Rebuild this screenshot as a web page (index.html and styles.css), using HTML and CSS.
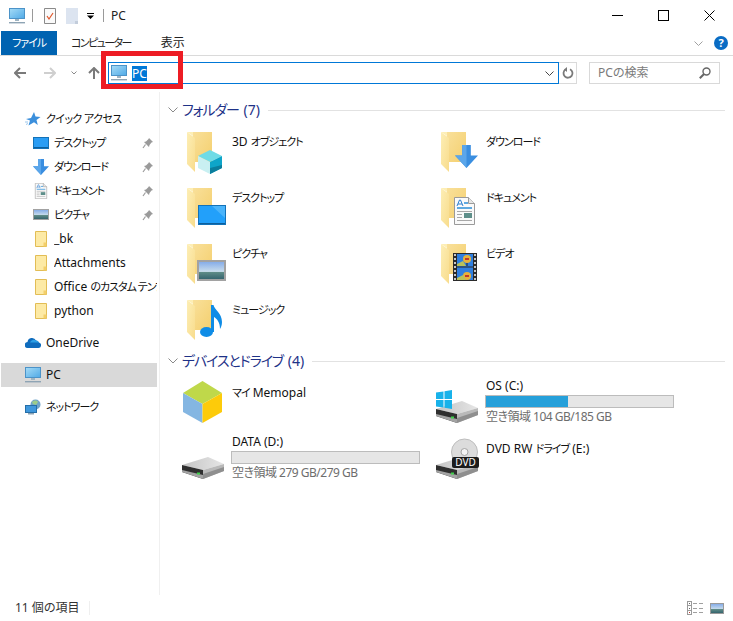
FILE: index.html
```html
<!DOCTYPE html>
<html lang="ja">
  <head>
    <meta charset="UTF-8" />
    <title>PC</title>
    <link rel="stylesheet" href="styles.css">
  </head>

  <body>
    <svg class="defs" aria-hidden="true">
      <defs>
        <linearGradient id="screen" x1="0" y1="0" x2="1" y2="1">
          <stop offset="0" stop-color="#a6dcf7" />
          <stop offset="1" stop-color="#4fa9e6" />
        </linearGradient>
        <linearGradient id="leaf" x1="0" y1="0" x2="1" y2="1">
          <stop offset="0" stop-color="#fdeeb5" />
          <stop offset="1" stop-color="#f8dc8c" />
        </linearGradient>
        <linearGradient id="back" x1="0" y1="0" x2="1" y2="1">
          <stop offset="0" stop-color="#f9e09a" />
          <stop offset="1" stop-color="#f4cf6e" />
        </linearGradient>
        <linearGradient id="drivetop" x1="0" y1="0" x2="1" y2="0">
          <stop offset="0" stop-color="#c4c4c4" />
          <stop offset="1" stop-color="#e6e6e6" />
        </linearGradient>
        <linearGradient id="sky" x1="0" y1="0" x2="0" y2="1">
          <stop offset="0" stop-color="#7fa8e8" />
          <stop offset="0.55" stop-color="#c8dcec" />
          <stop offset="0.6" stop-color="#5d8a86" />
          <stop offset="1" stop-color="#2f5f6b" />
        </linearGradient>

        <symbol id="pc" viewBox="0 0 16 16">
          <rect x="0.5" y="0.5" width="15" height="10" fill="url(#screen)" stroke="#4c93c8" />
          <rect x="6" y="11" width="4" height="2" fill="#9fb4c2" />
          <rect x="0" y="14" width="16" height="1.4" fill="#8ea4b4" />
        </symbol>

        <symbol id="folder" viewBox="0 0 48 44">
          <path d="M9 2h19v30H9z" fill="url(#back)" />
          <path d="M3 2h6v4H9z" fill="#fdeeb5" />
          <path d="M3 2 11 8v34l-8-8z" fill="url(#leaf)" />
          <path d="M11 32h3v5l-3 1z" fill="#fff" />
        </symbol>

        <symbol id="mini-folder" viewBox="0 0 16 16">
          <path d="M2.500 0.500h11v15h-11z" fill="#fdeaa5" stroke="#e2bd55" />
          <path d="M10.500 11.500h3v4h-3z" fill="#f3cf6b" />
        </symbol>

        <symbol id="pin" viewBox="0 0 12 12">
          <path d="M7 1l4 4-1.500 0.500L7.500 8 7 10 2 5l2-0.500L6.500 2z" fill="#9a9a9a" />
          <path d="M3.500 7.500 1 11" stroke="#9a9a9a" stroke-width="1.2" />
        </symbol>

        <symbol id="arrow-down" viewBox="0 0 24 24">
          <path d="M7.500 0h9v11H24L12 24 0 11h7.500z" fill="#3a8ee0" />
          <path d="M7.500 0H12v24L0 11h7.500z" fill="#5ba6ea" />
        </symbol>

        <symbol id="doc" viewBox="0 0 21 28">
          <path d="M0.500 0.500h14l6 6v21H0.500z" fill="#fafafa" stroke="#9a9a9a" />
          <path d="M14.500 0.500v6h6" fill="#e6e6e6" stroke="#9a9a9a" />
          <path d="M3 9l2.500-6h1L9 9M4 7h4" fill="none" stroke="#2d7fd0" />
          <path d="M10 6h4M3 11h15" stroke="#2d8fd8" stroke-width="1.3" />
          <path d="M3 14.500h15M3 17.500h5M3 20.500h5M3 23.500h15" stroke="#a8a8a8" />
          <rect x="10" y="16" width="8" height="5" fill="#5e8f8a" />
        </symbol>

        <symbol id="picture" viewBox="0 0 29 21">
          <rect x="1" y="1" width="27" height="19" fill="url(#sky)" stroke="#a2a2a2" stroke-width="2" />
        </symbol>

        <symbol id="drive" viewBox="0 0 42 23">
          <path d="M0 8 26 0l16 7-21 6z" fill="url(#drivetop)" />
          <path d="M0 8l21 5v9L0 15z" fill="#2f2f2f" />
          <path d="M0 13l21 5v4L0 15z" fill="#a3a3a3" />
          <path d="M21 13 42 7v7l-21 8z" fill="#b9b9b9" />
          <path d="M21 17 42 10v4l-21 8z" fill="#8f8f8f" />
          <rect x="15" y="15.500" width="3" height="2" fill="#3fd24b" />
        </symbol>
      </defs>
    </svg>

    <div class="window">
      <header class="titlebar">
        <svg class="qa-pc"><use href="#pc" /></svg>
        <span class="qa-sep"></span>
        <svg class="qa-doc" viewBox="0 0 12 16">
          <path d="M0.500 0.500h11v15H0.500z" fill="#fafafa" stroke="#8a8a8a" />
          <path d="M3 8l2 3 4-6" fill="none" stroke="#e0562a" stroke-width="1.200" />
        </svg>
        <svg class="qa-blank" viewBox="0 0 12 16">
          <path d="M0 0h12v16H0z" fill="#dce4f0" />
          <path d="M9 13h3v3H9z" fill="#c3cddb" />
        </svg>
        <svg class="qa-drop" viewBox="0 0 7 6">
          <path d="M0 0h7v1H0zM0 2.500h7L3.500 6z" fill="#000" />
        </svg>
        <span class="qa-sep qa-sep-last"></span>
        <span class="title-text">PC</span>
        <div class="window-btns">
          <span class="win-btn"><svg viewBox="0 0 11 11"><path d="M0 5.500h11" stroke="#000" /></svg></span>
          <span class="win-btn"><svg viewBox="0 0 11 11"><rect x="0.500" y="0.500" width="10" height="10" fill="none" stroke="#000" /></svg></span>
          <span class="win-btn"><svg viewBox="0 0 11 11"><path d="M0.500 0.500l10 10M10.500 0.500l-10 10" stroke="#000" /></svg></span>
        </div>
      </header>

      <div class="ribbon">
        <span class="tab tab-file"><span class="ja">ファイル</span></span>
        <span class="tab tab-computer">コンピューター</span>
        <span class="tab tab-view">表示</span>
        <svg class="ribbon-chevron" viewBox="0 0 9 5"><path d="M0.500 0.500l4 4 4-4" fill="none" stroke="#a0a0a0" /></svg>
        <span class="help">?</span>
      </div>

      <div class="navrow">
        <svg class="nav-arrow nav-back" viewBox="0 0 12 12"><path d="M6 1 1 6l5 5M1 6h11" fill="none" stroke="#7a7a7a" stroke-width="2" /></svg>
        <svg class="nav-arrow nav-forward" viewBox="0 0 12 12"><path d="M6 1l5 5-5 5M11 6H0" fill="none" stroke="#cfcfcf" stroke-width="2" /></svg>
        <svg class="nav-recent" viewBox="0 0 6 4"><path d="M0.500 0.500 3 3l2.500-2.500" fill="none" stroke="#8a8a8a" /></svg>
        <svg class="nav-arrow nav-up" viewBox="0 0 12 12"><path d="M1 6l5-5 5 5M6 1v11" fill="none" stroke="#7a7a7a" stroke-width="2" /></svg>
        <div class="address">
          <svg class="address-icon"><use href="#pc" /></svg>
          <span class="address-text">PC</span>
          <svg class="address-chevron" viewBox="0 0 9 5"><path d="M0.500 0.500l4 4 4-4" fill="none" stroke="#444" /></svg>
        </div>
        <div class="refresh">
          <svg viewBox="0 0 12 12" class="refresh-icon"><path d="M8 2.200A4.500 4.500 0 1 1 3.500 2.500" fill="none" stroke="#7a7a7a" stroke-width="1.800" /><path d="M5 0v5L2 2.500z" fill="#7a7a7a" /></svg>
        </div>
        <div class="search">
          <span class="search-text">PCの検索</span>
          <svg class="search-icon" viewBox="0 0 12 12"><circle cx="7.500" cy="4.500" r="3.500" fill="none" stroke="#666" stroke-width="1.400" /><path d="M5 7 0.800 11.200" stroke="#666" stroke-width="2" /></svg>
        </div>
      </div>

      <div class="body">
        <nav class="sidebar">
          <div class="tree-group">
            <div class="item">
              <svg class="item-icon" viewBox="0 0 16 16"><path d="M9 1l1.500 4.500 5 0.500-4 3 1.300 5L9 11.200 3.500 14.500 5 9.500 1 8l5-1z" fill="#3b8fdc" /><path d="M0 11h3M1 13.500l2-1" stroke="#9cc8ee" /></svg>
              <span class="item-text ja item-quick">クイック アクセス</span>
            </div>
            <div class="item item-child">
              <svg class="item-icon" viewBox="0 0 16 16"><rect x="0.500" y="2.500" width="15" height="11" fill="#2a9df4" stroke="#1372b8" /><path d="M1 12.500h14" stroke="#0c5f9c" /></svg>
              <span class="item-text ja">デスクトップ</span>
              <svg class="pin"><use href="#pin" /></svg>
            </div>
            <div class="item item-child">
              <svg class="item-icon"><use href="#arrow-down" /></svg>
              <span class="item-text ja">ダウンロード</span>
              <svg class="pin"><use href="#pin" /></svg>
            </div>
            <div class="item item-child">
              <svg class="item-icon"><use href="#doc" /></svg>
              <span class="item-text ja">ドキュメント</span>
              <svg class="pin"><use href="#pin" /></svg>
            </div>
            <div class="item item-child">
              <svg class="item-icon" viewBox="0 0 16 16"><rect x="0.500" y="2.500" width="15" height="10" fill="url(#sky)" stroke="#a2a2a2" /></svg>
              <span class="item-text ja">ピクチャ</span>
              <svg class="pin"><use href="#pin" /></svg>
            </div>
            <div class="item item-child">
              <svg class="item-icon"><use href="#mini-folder" /></svg>
              <span class="item-text">_bk</span>
            </div>
            <div class="item item-child">
              <svg class="item-icon"><use href="#mini-folder" /></svg>
              <span class="item-text">Attachments</span>
            </div>
            <div class="item item-child">
              <svg class="item-icon"><use href="#mini-folder" /></svg>
              <span class="item-text">Office <span class="ja">のカスタム テンプレート</span></span>
            </div>
            <div class="item item-child">
              <svg class="item-icon"><use href="#mini-folder" /></svg>
              <span class="item-text">python</span>
            </div>
          </div>
          <div class="tree-group">
            <div class="item">
              <svg class="item-icon" viewBox="0 0 16 16"><path d="M3 13a3 3 0 0 1-0.500-6A4.500 4.500 0 0 1 11 5.500a3.800 3.800 0 0 1 3 2A2.800 2.800 0 0 1 13.500 13z" fill="#0f6cbd" /><path d="M5 7.500a4 4 0 0 1 6-2 3.800 3.800 0 0 1 3 2z" fill="#2c9fe6" /></svg>
              <span class="item-text">OneDrive</span>
            </div>
          </div>
          <div class="tree-group">
            <div class="item item-selected">
              <svg class="item-icon"><use href="#pc" /></svg>
              <span class="item-text">PC</span>
            </div>
          </div>
          <div class="tree-group">
            <div class="item">
              <svg class="item-icon" viewBox="0 0 16 16"><circle cx="10.500" cy="5.500" r="5" fill="#6fa3c9" /><path d="M7 3c2-2 5-2 6 0l-2 3-3-1z" fill="#9ccc8a" /><rect x="0.500" y="6.500" width="11" height="7" fill="#3f97dc" stroke="#256ea8" /><rect x="3" y="14" width="6" height="1.500" fill="#8ea4b4" /></svg>
              <span class="item-text ja">ネットワーク</span>
            </div>
          </div>
        </nav>

        <main class="content">
          <div class="group-head">
            <svg class="group-chevron" viewBox="0 0 10 6"><path d="M0.500 0.500 5 5l4.500-4.500" fill="none" stroke="#8a8a8a" /></svg>
            <span class="group-title"><span class="ja-head">フォルダー</span> (7)</span>
            <span class="group-line"></span>
          </div>
          <div class="tiles">
            <div class="tile">
              <svg class="tile-icon" viewBox="0 0 48 52">
                <use href="#folder" width="48" height="44" />
                <path d="M14 26 26 20l12 6-12 6z" fill="#6fdbe6" />
                <path d="M14 26l12 6v12l-12-6z" fill="#c9f0f2" />
                <path d="M38 26 26 32v12l12-6z" fill="#0ea5c9" />
                <path d="M26 38v6l12-6v-3z" fill="#0b7e9d" />
              </svg>
              <span class="tile-name">3D <span class="ja">オブジェクト</span></span>
            </div>
            <div class="tile">
              <svg class="tile-icon" viewBox="0 0 48 52">
                <use href="#folder" width="48" height="44" />
                <use href="#arrow-down" x="17" y="15" width="23" height="23" />
              </svg>
              <span class="tile-name ja">ダウンロード</span>
            </div>
            <div class="tile">
              <svg class="tile-icon" viewBox="0 0 48 52">
                <use href="#folder" width="48" height="44" />
                <rect x="14.500" y="19.500" width="27" height="19" fill="#22a0fa" stroke="#1372b8" />
                <path d="M28 20h13v12z" fill="#4ab4fb" />
                <path d="M15 37.500h26" stroke="#0c5f9c" />
              </svg>
              <span class="tile-name ja">デスクトップ</span>
            </div>
            <div class="tile">
              <svg class="tile-icon" viewBox="0 0 48 52">
                <use href="#folder" width="48" height="44" />
                <use href="#doc" x="16" y="11" width="21" height="28" />
              </svg>
              <span class="tile-name ja">ドキュメント</span>
            </div>
            <div class="tile">
              <svg class="tile-icon" viewBox="0 0 48 52">
                <use href="#folder" width="48" height="44" />
                <use href="#picture" x="13" y="18" width="29" height="21" />
              </svg>
              <span class="tile-name ja">ピクチャ</span>
            </div>
            <div class="tile">
              <svg class="tile-icon" viewBox="0 0 48 52">
                <use href="#folder" width="48" height="44" />
                <rect x="15" y="11" width="24" height="28" fill="#2b2b2b" />
                <rect x="19" y="12" width="16" height="12.500" fill="#2f7fe0" />
                <rect x="19" y="25.500" width="16" height="12.500" fill="#2f7fe0" />
                <circle cx="29" cy="17" r="4" fill="#e8b23a" />
                <path d="M27 17h4" stroke="#c0392b" stroke-width="2" />
                <path d="M29 21v3" stroke="#222" />
                <circle cx="29" cy="34" r="4" fill="#e8b23a" />
                <path d="M27 34h4" stroke="#c0392b" stroke-width="2" />
                <path d="M19 22l6-3 3 5h-9zM19 36l6-3 3 5h-9z" fill="#b9c25a" />
                <path d="M17 12v26M37 12v26" stroke="#c9c9c9" stroke-width="2" stroke-dasharray="2 2" />
              </svg>
              <span class="tile-name ja">ビデオ</span>
            </div>
            <div class="tile">
              <svg class="tile-icon" viewBox="0 0 48 52">
                <use href="#folder" width="48" height="44" />
                <ellipse cx="22.500" cy="34" rx="6.500" ry="5" fill="#0f8ce6" />
                <path d="M27 34V7h2.500c1 5 8.500 8 8.500 17 0 3-1 5.500-2 7 0-7-3-10-6-12v15z" fill="#0f8ce6" />
              </svg>
              <span class="tile-name ja">ミュージック</span>
            </div>
          </div>

          <div class="group-head group-devices">
            <svg class="group-chevron" viewBox="0 0 10 6"><path d="M0.500 0.500 5 5l4.500-4.500" fill="none" stroke="#8a8a8a" /></svg>
            <span class="group-title"><span class="ja-head">デバイスとドライブ</span> (4)</span>
            <span class="group-line"></span>
          </div>
          <div class="tiles drives">
            <div class="tile tile-single">
              <svg class="tile-icon" viewBox="0 0 48 52">
                <path d="M-1 17 18.500 5 38 17 18.500 28z" fill="#bfd84a" />
                <path d="M-1 17l19.500 11v19L-1 36z" fill="#84b6e2" />
                <path d="M38 17 18.500 28v19L38 36z" fill="#fdcb0a" />
              </svg>
              <span class="tile-name"><span class="ja">マイ</span> Memopal</span>
            </div>
            <div class="tile">
              <svg class="tile-icon" viewBox="0 0 48 52">
                <use href="#drive" x="-2" y="25" width="42" height="23" />
                <path d="M-2 16.500 5.500 15.500v7.500H-2zM6.500 15.300 14 14v9H6.500zM-2 24H5.500v7.500L-2 30.500zM6.500 24H14v9l-7.500-1.300z" fill="#18b2ea" />
              </svg>
              <div class="drive-info">
                <span class="tile-name">OS (C:)</span>
                <div class="meter"><div class="meter-fill" style="width: 43.8%"></div></div>
                <span class="drive-free">空き領域 104 GB/185 GB</span>
              </div>
            </div>
            <div class="tile">
              <svg class="tile-icon" viewBox="0 0 48 52">
                <use href="#drive" x="-2" y="25" width="42" height="23" />
              </svg>
              <div class="drive-info">
                <span class="tile-name">DATA (D:)</span>
                <div class="meter"></div>
                <span class="drive-free">空き領域 279 GB/279 GB</span>
              </div>
            </div>
            <div class="tile tile-single">
              <svg class="tile-icon" viewBox="0 0 48 52">
                <use href="#drive" x="-2" y="25" width="42" height="23" />
                <circle cx="26.500" cy="20" r="13" fill="#dcdcdc" stroke="#bdbdbd" />
                <circle cx="26.500" cy="20" r="3.500" fill="#f5f5f5" stroke="#a5a5a5" />
                <rect x="14" y="25" width="27" height="11" rx="2" fill="#1c1c1c" />
                <text x="27.500" y="34" class="dvd-label">DVD</text>
              </svg>
              <span class="tile-name">DVD RW <span class="ja">ドライブ</span> (E:)</span>
            </div>
          </div>
        </main>
      </div>

      <footer class="status">
        <span class="status-count">11 個の項目</span>
        <span class="status-sep"></span>
        <svg class="view-details" viewBox="0 0 16 14">
          <rect x="0.500" y="0.500" width="4" height="13" fill="#fff" stroke="#9a9a9a" />
          <path d="M0 4.500h5M0 9.500h5" stroke="#9a9a9a" />
          <path d="M2 2h1v1H2zM2 7h1v1H2z" fill="#666" />
          <path d="M2 11h1v1H2z" fill="#c0392b" />
          <path d="M6 2.500h4M12 2.500h4M6 7.500h4M12 7.500h4M6 11.500h4M12 11.500h4" stroke="#a0a0a0" />
        </svg>
        <svg class="view-large" viewBox="0 0 14 11">
          <rect x="0.500" y="0.500" width="13" height="10" fill="url(#sky)" stroke="#9a9a9a" />
        </svg>
      </footer>

      <div class="highlight"></div>
    </div>
  </body>
</html>
```

FILE: styles.css
```css
html,
body {
  margin: 0;
  padding: 0;
  background: #fff;
}

body {
  font-family: "Noto Sans", "Noto Sans CJK JP", sans-serif;
  font-size: 12px;
  line-height: 18px;
  color: #000;
  font-feature-settings: "palt";
}

svg {
  display: block;
  flex: none;
}

.defs {
  width: 0;
  height: 0;
}

/* the kana in this font run wider than in the screenshot */
.ja {
  font-size: 11px;
  letter-spacing: -1px;
}

.ja-head {
  letter-spacing: -1.1px;
  margin-right: 1px;
}

.window {
  position: relative;
  width: 733px;
  height: 621px;
  overflow: hidden;
  display: flex;
  flex-direction: column;
}

/* title bar */
.titlebar {
  height: 31px;
  display: flex;
  align-items: center;
  padding-left: 9px;
  flex: none;
}

.qa-pc {
  width: 16px;
  height: 16px;
}

.qa-sep {
  width: 1px;
  height: 13px;
  background: #9a9a9a;
  margin: 0 11px 0 7px;
}

.qa-sep-last {
  margin: 0 7px 0 9px;
}

.qa-doc,
.qa-blank {
  width: 12px;
  height: 16px;
  margin-right: 10px;
}

.qa-blank {
  margin-right: 9px;
}

.qa-drop {
  width: 7px;
  height: 6px;
}

.title-text {
  color: #222;
}

.window-btns {
  margin-left: auto;
  display: flex;
  padding-right: 1px;
}

.win-btn {
  width: 46px;
  height: 31px;
  display: flex;
  align-items: center;
  justify-content: center;
}

.win-btn svg {
  width: 11px;
  height: 11px;
}

/* ribbon */
.ribbon {
  height: 24px;
  padding-left: 1px;
  padding-right: 5px;
  display: flex;
  align-items: center;
  border-bottom: 1px solid #dadada;
  flex: none;
}

.tab {
  height: 24px;
  line-height: 23px;
  text-align: center;
}

.tab-file {
  width: 56px;
  background: #0063b1;
  color: #fff;
}

.tab-computer {
  margin-left: 14px;
  color: #222;
  font-size: 11px;
  letter-spacing: -1.6px;
}

.tab-view {
  margin-left: 30px;
  color: #222;
}

.ribbon-chevron {
  width: 9px;
  height: 5px;
  margin-left: auto;
}

.help {
  width: 14px;
  height: 14px;
  margin-left: 11px;
  border-radius: 50%;
  background: #0a6cc4;
  color: #fff;
  font-weight: bold;
  font-size: 11px;
  line-height: 14px;
  text-align: center;
}

/* address row */
.navrow {
  height: 36px;
  display: flex;
  align-items: flex-start;
  padding-top: 6px;
  box-sizing: border-box;
  flex: none;
}

.nav-arrow {
  width: 12px;
  height: 12px;
  margin-top: 5px;
}

.nav-back {
  margin-left: 14px;
}

.nav-forward {
  margin-left: 18px;
}

.nav-recent {
  width: 6px;
  height: 4px;
  margin: 9px 0 0 15px;
}

.nav-up {
  margin-left: 11px;
}

.address {
  width: 451px;
  height: 22px;
  margin-left: 8px;
  border: 1px solid #0078d7;
  box-sizing: border-box;
  display: flex;
  align-items: center;
  padding-left: 2px;
}

.address-icon {
  width: 16px;
  height: 16px;
}

.address-text {
  margin-left: 5px;
  width: 15px;
  height: 15px;
  line-height: 15px;
  background: #0078d7;
  color: #fff;
  text-align: center;
}

.address-chevron {
  width: 9px;
  height: 5px;
  margin-left: auto;
  margin-right: 4px;
}

.refresh {
  width: 18px;
  height: 22px;
  border: 1px solid #dadada;
  border-left: 0;
  box-sizing: border-box;
  display: flex;
  align-items: center;
  justify-content: center;
}

.refresh-icon {
  width: 12px;
  height: 12px;
}

.search {
  width: 131px;
  height: 22px;
  margin-left: 12px;
  border: 1px solid #d9d9d9;
  box-sizing: border-box;
  padding: 0 8px;
  display: flex;
  align-items: center;
  justify-content: space-between;
}

.search-text {
  color: #7a7a7a;
}

.search-icon {
  width: 12px;
  height: 12px;
}

/* body */
.body {
  flex: 1;
  min-height: 0;
  display: flex;
}

.sidebar {
  width: 160px;
  box-sizing: border-box;
  padding: 15px 2px 0 1px;
  border-right: 1px solid #f0f0f0;
  display: flex;
  flex-direction: column;
  gap: 8px;
  flex: none;
}

.item {
  height: 24px;
  display: flex;
  align-items: center;
  padding-left: 24px;
  gap: 5px;
}

.item-child {
  padding-left: 32px;
}

.item-selected {
  background: #d9d9d9;
}

.item-icon {
  width: 16px;
  height: 16px;
}

.item-text {
  flex: 1;
  min-width: 0;
  white-space: nowrap;
  overflow: hidden;
  color: #111;
}

.item-quick {
  letter-spacing: -0.6px;
}

.pin {
  width: 12px;
  height: 12px;
  margin-right: 3px;
}

/* main */
.content {
  flex: 1;
  min-width: 0;
  padding: 8px 8px 0 8px;
}

.group-head {
  height: 20px;
  display: flex;
  align-items: center;
}

.group-devices {
  margin-top: 1px;
}

.group-chevron {
  width: 10px;
  height: 6px;
  margin-right: 4px;
}

.group-title {
  font-size: 14px;
  color: #1e3287;
  margin-right: 8px;
  white-space: nowrap;
}

.group-line {
  flex: 1;
  height: 1px;
  background: #e2e2e2;
}

.tiles {
  display: grid;
  grid-template-columns: 254px 254px;
  row-gap: 4px;
  margin: 10px 0 0 12px;
}

.drives {
  margin-top: 5px;
}

.tile {
  height: 52px;
  padding-left: 4px;
  display: flex;
  align-items: flex-start;
}

.tile-icon {
  width: 48px;
  height: 52px;
  overflow: visible;
}

.tile-name {
  display: block;
  padding-top: 3px;
  white-space: nowrap;
  color: #111;
}

.tile-single .tile-name {
  padding-top: 8px;
}

.drive-info {
  flex: 1;
}

.drive-info .tile-name {
  padding-top: 1px;
}

.meter {
  width: 189px;
  height: 13px;
  margin-left: -1px;
  background: #e6e6e6;
  border: 1px solid #bcbcbc;
  box-sizing: border-box;
}

.meter-fill {
  height: 100%;
  background: #26a0da;
}

.drive-free {
  display: block;
  color: #6d6d6d;
  letter-spacing: -0.5px;
}

.dvd-label {
  font-size: 10px;
  fill: #fff;
  text-anchor: middle;
}

/* status */
.status {
  height: 26px;
  padding: 0 9px 0 15px;
  display: flex;
  align-items: center;
  flex: none;
}

.status-count {
  color: #333;
}

.status-sep {
  width: 1px;
  height: 14px;
  margin-left: 10px;
  background: #efefef;
}

.view-details {
  width: 16px;
  height: 14px;
  margin-left: auto;
}

.view-large {
  width: 14px;
  height: 11px;
  margin-left: 7px;
}

/* annotation over the address bar */
.highlight {
  position: absolute;
  left: 101px;
  top: 51px;
  width: 82px;
  height: 38px;
  border: 5px solid #ed1c24;
  box-sizing: border-box;
}
```
